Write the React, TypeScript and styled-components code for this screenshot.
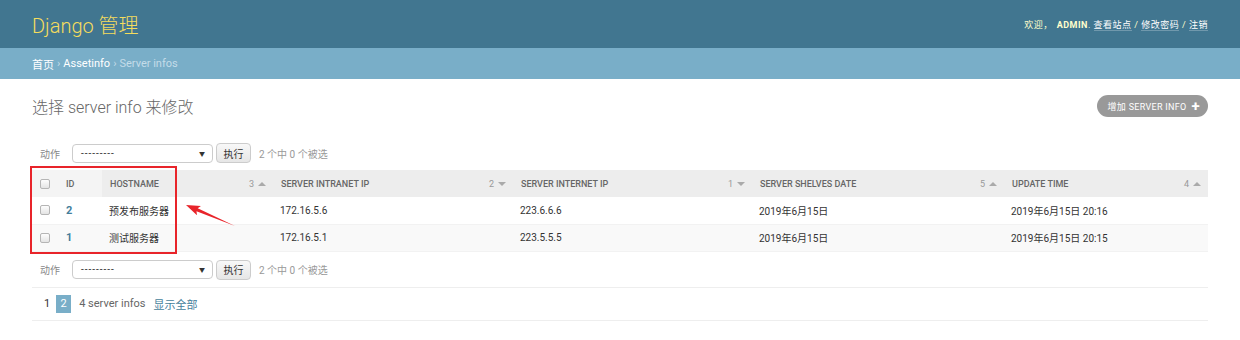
import React from "react";
import styled, { createGlobalStyle } from "styled-components";

const GlobalStyle = createGlobalStyle`
  body {
    margin: 0;
    background: #fff;
    color: #333;
    font-family: Roboto, "Noto Sans CJK SC", sans-serif;
  }
  * { box-sizing: border-box; }
`;

// 표 데이터
const columns = [
  { key: "hostname", label: "Hostname", width: 171, sort: 3, dir: "up" },
  { key: "intranet", label: "Server intranet ip", width: 240, sort: 2, dir: "down" },
  { key: "internet", label: "Server internet ip", width: 239, sort: 1, dir: "down" },
  { key: "shelves", label: "Server shelves date", width: 252, sort: 5, dir: "up" },
  { key: "update", label: "Update time", width: 204, sort: 4, dir: "up" },
];

const rows = [
  { id: 2, hostname: "预发布服务器", intranet: "172.16.5.6", internet: "223.6.6.6", shelves: "2019年6月15日", update: "2019年6月15日 20:16" },
  { id: 1, hostname: "测试服务器", intranet: "172.16.5.1", internet: "223.5.5.5", shelves: "2019年6月15日", update: "2019年6月15日 20:15" },
];

const ActionBar: React.FC = () => (
  <Actions>
    <ActionLabel>动作</ActionLabel>
    <FakeSelect>
      <span>---------</span>
      <Caret>▼</Caret>
    </FakeSelect>
    <GoButton>执行</GoButton>
    <Counter>2 个中 0 个被选</Counter>
  </Actions>
);

export default function App() {
  return (
    <>
      <GlobalStyle />
      <Header>
        <Branding>Django 管理</Branding>
        <UserTools>
          欢迎，<Admin>admin</Admin>. <ToolLink>查看站点</ToolLink> / <ToolLink>修改密码</ToolLink> / <ToolLink>注销</ToolLink>
        </UserTools>
      </Header>
      <Breadcrumbs>
        <CrumbLink>首页</CrumbLink>
        <Sep>›</Sep>
        <CrumbLink>Assetinfo</CrumbLink>
        <Sep>›</Sep>
        <span>Server infos</span>
      </Breadcrumbs>

      <Content>
        <TitleRow>
          <Title>选择 server info 来修改</Title>
          <AddButton>
            增加 server info
            <Plus>+</Plus>
          </AddButton>
        </TitleRow>

        <ActionBar />

        <TableWrap>
          <Table>
            <colgroup>
              <col style={{ width: 24 }} />
              <col style={{ width: 46 }} />
              {columns.map((c) => (
                <col key={c.key} style={{ width: c.width }} />
              ))}
            </colgroup>
            <thead>
              <tr>
                <Th $first>
                  <Check />
                </Th>
                <Th $pad={10}>ID</Th>
                {columns.map((c) => (
                  <Th key={c.key} $sorted>
                    <HeadInner>
                      <span>{c.label}</span>
                      <SortBox>
                        {c.sort}
                        <SortArrow $dir={c.dir} />
                      </SortBox>
                    </HeadInner>
                  </Th>
                ))}
              </tr>
            </thead>
            <tbody>
              {rows.map((r, i) => (
                <Row key={r.id} $alt={i % 2 === 1}>
                  <Td $first>
                    <Check />
                  </Td>
                  <Td $pad={10}>
                    <IdLink>{r.id}</IdLink>
                  </Td>
                  <Td>{r.hostname}</Td>
                  <Td>{r.intranet}</Td>
                  <Td>{r.internet}</Td>
                  <Td>{r.shelves}</Td>
                  <Td>{r.update}</Td>
                </Row>
              ))}
            </tbody>
          </Table>

          {/* 스크린샷 위의 빨간 표시 */}
          <Highlight />
          <ArrowSvg width="220" height="70" viewBox="0 0 220 70">
            <polygon
              points="154,35 164.96,45.16 164.5,41.14 203,56 165.68,38.36 168.92,35.92"
              fill="#e8242a"
            />
          </ArrowSvg>
        </TableWrap>

        <BottomActions>
          <ActionBar />
        </BottomActions>

        <Paginator>
          <PageNum>1</PageNum>
          <CurrentPage>2</CurrentPage>
          <PageInfo>4 server infos</PageInfo>
          <ShowAll>显示全部</ShowAll>
        </Paginator>
      </Content>
    </>
  );
}

const Header = styled.div`
  height: 48px;
  padding: 0 32px;
  background: #417690;
  display: flex;
  justify-content: space-between;
  align-items: center;
`;

const Branding = styled.h1`
  margin: 0;
  font-size: 20px;
  font-weight: 300;
  color: #f5dd5d;
`;

const UserTools = styled.div`
  font-size: 9px;
  letter-spacing: 0.5px;
  color: #ffc;
`;

const Admin = styled.strong`
  margin-left: 4px;
  font-weight: 700;
  text-transform: uppercase;
`;

const ToolLink = styled.span`
  color: #fff;
  border-bottom: 1px solid rgba(255, 255, 255, 0.25);
`;

const Breadcrumbs = styled.div`
  height: 31px;
  padding: 0 32px;
  background: #79aec8;
  color: #c4dce8;
  font-size: 11px;
  display: flex;
  align-items: center;
`;

const CrumbLink = styled.span`
  color: #fff;
`;

const Sep = styled.span`
  margin: 0 3px;
`;

const Content = styled.div`
  padding: 15px 32px 0;
`;

const TitleRow = styled.div`
  height: 24px;
  display: flex;
  justify-content: space-between;
  align-items: center;
`;

const Title = styled.h1`
  margin: 0;
  font-size: 16px;
  font-weight: 300;
  color: #666;
`;

const AddButton = styled.div`
  height: 22px;
  padding: 0 8px 0 11px;
  border-radius: 15px;
  background: #999;
  color: #fff;
  font-size: 9px;
  letter-spacing: 0.3px;
  text-transform: uppercase;
  display: flex;
  align-items: center;
  gap: 5px;
`;

const Plus = styled.span`
  font-size: 15px;
  font-weight: 700;
  line-height: 1;
`;

const Actions = styled.div`
  height: 22px;
  margin-top: 24px;
  padding-left: 8px;
  display: flex;
  align-items: center;
  font-size: 10px;
`;

const ActionLabel = styled.span`
  color: #888;
  margin-right: 12px;
`;

const FakeSelect = styled.div`
  width: 141px;
  height: 19px;
  padding: 0 6px 0 8px;
  border: 1px solid #ccc;
  border-radius: 4px;
  background: #fff;
  color: #333;
  display: flex;
  justify-content: space-between;
  align-items: center;
  letter-spacing: 1px;
`;

const Caret = styled.span`
  font-size: 6px;
  color: #333;
`;

const GoButton = styled.div`
  width: 35px;
  height: 20px;
  margin-left: 3px;
  border: 1px solid #ccc;
  border-radius: 4px;
  background: linear-gradient(#f8f8f8, #e6e6e6);
  color: #333;
  display: flex;
  justify-content: center;
  align-items: center;
  font-size: 10px;
`;

const Counter = styled.span`
  margin-left: 8px;
  color: #999;
`;

const TableWrap = styled.div`
  position: relative;
  margin-top: 6px;
`;

const Table = styled.table`
  width: 100%;
  table-layout: fixed;
  border-collapse: collapse;
`;

const Th = styled.th<{ $sorted?: boolean; $first?: boolean; $pad?: number }>`
  height: 27px;
  padding: 0 7px 0 ${(p) => (p.$first ? 8 : p.$pad ?? 8)}px;
  background: ${(p) => (p.$sorted ? "#ededed" : "#f4f4f4")};
  color: #666;
  font-size: 9px;
  font-weight: 500;
  text-align: left;
  text-transform: uppercase;
  white-space: nowrap;
`;

const HeadInner = styled.div`
  display: flex;
  justify-content: space-between;
  align-items: center;
`;

const SortBox = styled.span`
  display: flex;
  align-items: center;
  gap: 4px;
  color: #999;
  font-weight: 400;
`;

const SortArrow = styled.span<{ $dir: string }>`
  width: 0;
  height: 0;
  border-left: 4px solid transparent;
  border-right: 4px solid transparent;
  ${(p) =>
    p.$dir === "up"
      ? "border-bottom: 4px solid #aaa;"
      : "border-top: 4px solid #aaa;"}
`;

const Row = styled.tr<{ $alt: boolean }>`
  background: ${(p) => (p.$alt ? "#f9f9f9" : "#fff")};
`;

const Td = styled.td<{ $first?: boolean; $pad?: number }>`
  height: 27px;
  padding: 0 7px 0 ${(p) => (p.$first ? 8 : p.$pad ?? 7)}px;
  border-bottom: 1px solid #f2f2f2;
  font-size: 10px;
  color: #333;
  white-space: nowrap;
`;

const Check = styled.span`
  display: block;
  width: 10px;
  height: 10px;
  border: 1px solid #b5b5b5;
  border-radius: 2px;
  background: linear-gradient(#fdfdfd, #e4e4e4);
`;

const IdLink = styled.span`
  color: #447e9b;
  font-weight: 700;
  font-size: 11px;
`;

const Highlight = styled.div`
  position: absolute;
  left: -2px;
  top: -4px;
  width: 147px;
  height: 88px;
  border: 2px solid #e8242a;
  pointer-events: none;
`;

const ArrowSvg = styled.svg`
  position: absolute;
  left: 0;
  top: 0;
  pointer-events: none;
`;

const BottomActions = styled.div`
  margin-top: -17px;
`;

const Paginator = styled.div`
  height: 34px;
  margin-top: 6px;
  padding-left: 12px;
  border-top: 1px solid #eee;
  border-bottom: 1px solid #eee;
  display: flex;
  align-items: center;
  font-size: 11px;
  color: #666;
`;

const PageNum = styled.span`
  color: #333;
`;

const CurrentPage = styled.span`
  margin-left: 6px;
  width: 15px;
  height: 18px;
  background: #79aec8;
  color: #fff;
  display: flex;
  justify-content: center;
  align-items: center;
`;

const PageInfo = styled.span`
  margin-left: 8px;
`;

const ShowAll = styled.span`
  margin-left: 8px;
  color: #447e9b;
`;
